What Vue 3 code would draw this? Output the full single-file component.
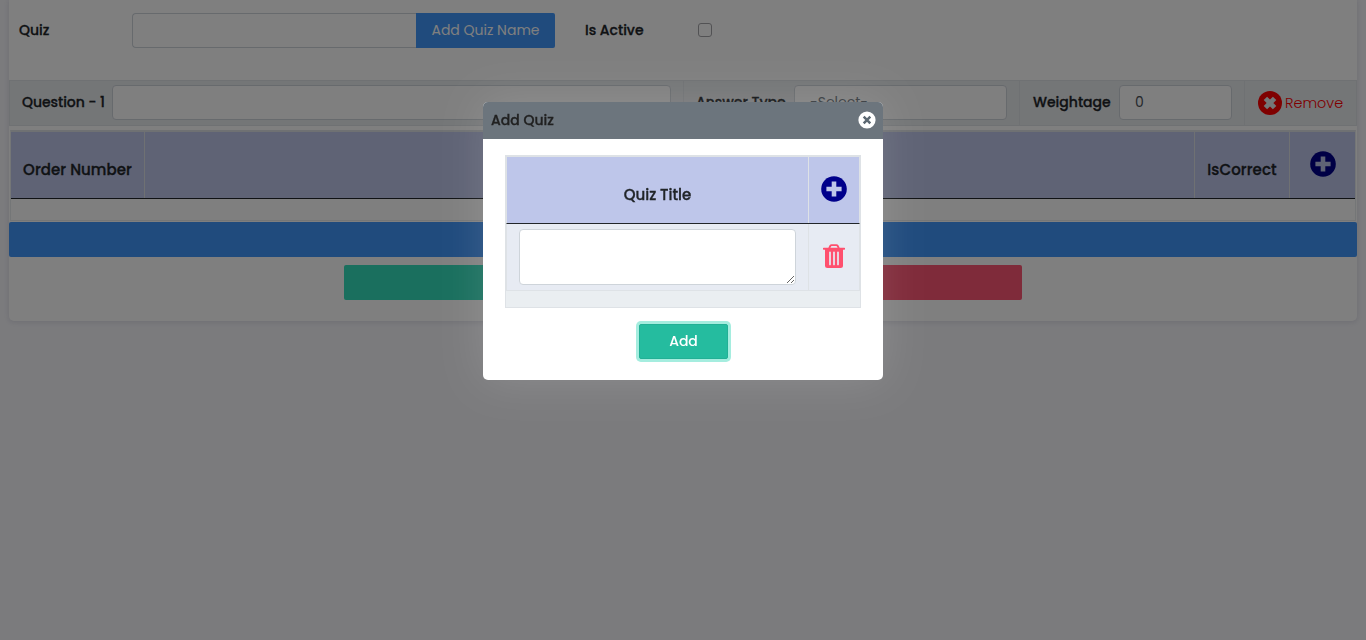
<script setup>
import { ref } from 'vue'

const quizName = ref('')
const isActive = ref(false)
const question = ref('')
const weightage = ref('0')
const title = ref('')
</script>

<template>
  <div class="page">
    <main class="card">
      <div class="quiz-row">
        <label class="label quiz-label">Quiz</label>
        <div class="input-group">
          <input v-model="quizName" class="control" type="text" />
          <button class="btn-name">Add Quiz Name</button>
        </div>
        <label class="label active-label">Is Active</label>
        <input v-model="isActive" class="check" type="checkbox" />
      </div>

      <div class="question-row">
        <div class="cell c-question">
          <span class="label t-question">Question - 1</span>
          <input v-model="question" class="control" type="text" />
        </div>
        <div class="cell c-type">
          <span class="label t-type">Answer Type</span>
          <div class="control select">-Select-</div>
        </div>
        <div class="cell c-weight">
          <span class="label t-weight">Weightage</span>
          <input v-model="weightage" class="control number" type="text" />
        </div>
        <div class="cell c-remove">
          <svg width="24" height="24" viewBox="0 0 24 24">
            <circle cx="12" cy="12" r="12" fill="#f00" />
            <path d="M7.4 7.4l9.2 9.2M16.6 7.4l-9.2 9.2" stroke="#e9ecef" stroke-width="4.800" />
          </svg>
          <span class="remove">Remove</span>
        </div>
      </div>

      <div class="answers">
        <div class="answers-head">
          <div class="th order">Order Number</div>
          <div class="th fill"></div>
          <div class="th correct">IsCorrect</div>
          <div class="th plus">
            <svg width="26" height="26" viewBox="0 0 26 26">
              <circle cx="13" cy="13" r="12.8" fill="#00008b" />
              <path d="M13 5.4v15.2M5.4 13h15.2" stroke="#bec6ea" stroke-width="4.6" />
            </svg>
          </div>
        </div>
      </div>

      <div class="bar"></div>
      <div class="actions">
        <div class="action save"></div>
        <div class="action cancel"></div>
      </div>
    </main>

    <div class="backdrop">
      <section class="modal">
        <header class="modal-head">
          <h2>Add Quiz</h2>
          <svg width="18" height="18" viewBox="0 0 18 18">
            <circle cx="9" cy="9" r="8.6" fill="#fff" />
            <path d="M5.700 5.700l6.600 6.600M12.300 5.700l-6.600 6.600" stroke="#5d6973" stroke-width="2.5" />
          </svg>
        </header>
        <div class="modal-body">
          <div class="grid">
            <div class="grid-head">
              <div class="g-title">Quiz Title</div>
              <div class="g-icon">
                <svg width="26" height="26" viewBox="0 0 26 26">
                  <circle cx="13" cy="13" r="12.8" fill="#00008b" />
                  <path d="M13 5.4v15.2M5.4 13h15.2" stroke="#bec6ea" stroke-width="4.6" />
                </svg>
              </div>
            </div>
            <div class="grid-row">
              <div class="g-title"><textarea v-model="title"></textarea></div>
              <div class="g-icon">
                <svg width="22" height="25" viewBox="0 0 22 25" fill="none">
                  <path d="M6.2 4.2L7.4 1.8Q7.8 1.1 8.6 1.1H13.4Q14.2 1.1 14.6 1.8L15.8 4.2" stroke="#ff506e" stroke-width="1.9" />
                  <rect y="3.8" width="22" height="1.9" rx=".6" fill="#ff506e" />
                  <path d="M2 5h18v16.500q0 2.5-2.5 2.5h-13Q2 24 2 21.500z" fill="#ff506e" />
                  <path d="M7 8.3v12.100M11 8.3v12.100M15 8.3v12.100" stroke="#e7ebf3" stroke-width="1.7" stroke-linecap="round" />
                </svg>
              </div>
            </div>
          </div>
          <button class="btn-add">Add</button>
        </div>
      </section>
    </div>
  </div>
</template>

<style>
body {
  margin: 0;
  overflow: hidden;
}
</style>

<style scoped>
.page,
.page * {
  box-sizing: border-box;
}
.page {
  height: 640px;
  padding: 0 9px;
  background: #f7f7fb;
  color: #212529;
  font-family: Poppins, Inter, "Open Sans", sans-serif;
  font-size: 14px;
}
svg {
  display: block;
  flex: none;
}
.card {
  height: 321px;
  background: #fff;
  border-radius: 0 0 5px 5px;
  box-shadow: 0 1px 5px 1px rgba(69, 65, 110, 0.12);
}
.quiz-row {
  display: flex;
  align-items: center;
  height: 80px;
  padding: 0 10px 20px;
}
.label {
  font-weight: 500;
  white-space: nowrap;
}
.label,
.th,
.grid-head,
.modal-head h2 {
  -webkit-text-stroke: 0.3px currentColor;
}
.quiz-label {
  width: 113px;
}
.input-group {
  display: flex;
  width: 423px;
}
.control {
  display: block;
  min-width: 0;
  height: 35px;
  border: 1px solid #ced4da;
  border-radius: 4px;
  background: #fff;
  color: #495057;
  font: inherit;
  outline: 0;
}
.input-group .control {
  flex: 1;
  border-right: 0;
  border-radius: 4px 0 0 4px;
}
.btn-name {
  width: 139px;
  height: 35px;
  padding: 0;
  border: 0;
  border-radius: 0 2px 2px 0;
  background: #4096fa;
  color: #fff;
  font: inherit;
  white-space: nowrap;
}
.active-label {
  width: 113px;
  margin-left: 30px;
}
.check {
  appearance: none;
  width: 14px;
  height: 14px;
  margin: 0;
  border: 1px solid #a4a4a8;
  border-radius: 3px;
  background: #fff;
}
.question-row {
  display: flex;
  height: 46px;
  border: 1px solid #dee2e6;
  background: #e9ecef;
}
.cell {
  display: flex;
  align-items: center;
  padding: 0 12px 2px;
  border-right: 1px solid #dee2e6;
}
.cell .label {
  flex: none;
}
.cell .control {
  flex: 1;
}
.c-question {
  width: 674px;
}
.t-question {
  width: 90px;
  letter-spacing: -0.06px;
}
.c-type {
  width: 336px;
}
.t-type {
  width: 98px;
}
.c-weight {
  width: 225px;
}
.t-weight {
  width: 87px;
  padding-left: 1px;
}
.c-remove {
  flex: 1;
  padding: 0 0 1px 13px;
  border: 0;
}
.remove {
  margin: 2px 0 0 3px;
  color: #f00;
  font-size: 14.4px;
  font-weight: 300;
}
.cell .select {
  padding: 0 15px;
  line-height: 33px;
  color: #6c757d;
}
.cell .number {
  padding: 0 15px;
}
.answers {
  height: 91px;
  margin: 4px 1px 0;
  border: 1px solid #e9ecef;
  border-top-color: #dee2e6;
}
.answers-head {
  display: flex;
  height: 68px;
  border-top: 1px solid #dee2e6;
  border-bottom: 1px solid #212529;
  background: #bec6ea;
}
.th {
  display: flex;
  align-items: center;
  justify-content: center;
  padding-top: 8px;
  border-right: 1px solid #dee2e6;
  font-size: 15px;
  font-weight: 500;
  white-space: nowrap;
}
.order {
  width: 134px;
  letter-spacing: 0.08px;
}
.fill {
  flex: 1;
}
.correct {
  width: 95px;
  letter-spacing: 0.1px;
}
.plus {
  width: 65px;
  padding: 0 0 3px;
  border-right: 0;
}
.bar {
  height: 35px;
  margin-top: 1px;
  border-radius: 2px;
  background: #4096fa;
}
.actions {
  display: flex;
  width: 678px;
  margin: 8px 0 0 335px;
}
.action {
  flex: 1;
  height: 35px;
  border-radius: 2px;
}
.save {
  background: #34debc;
}
.cancel {
  background: #ff5674;
}
.backdrop {
  position: fixed;
  inset: 0;
  background: rgba(0, 0, 0, 0.5);
}
.modal {
  width: 400px;
  height: 278px;
  margin: 102px 0 0 483px;
  overflow: hidden;
  border-radius: 5px;
  background: #fff;
  box-shadow: 0 0 45px rgba(255, 255, 255, 0.14);
}
.modal-head {
  display: flex;
  align-items: center;
  justify-content: space-between;
  height: 37px;
  padding: 0 7px 1px 8px;
  background: #6c757d;
}
.modal-head h2 {
  margin: 0;
  color: #212121;
  font-size: 14px;
  font-weight: 500;
}
.modal-body {
  padding: 16px 22px;
}
.grid {
  height: 153px;
  border: 1px solid #dee2e6;
  background: #eaeef1;
}
.grid-head,
.grid-row {
  display: flex;
  border: 1px solid #dee2e6;
}
.grid-head {
  height: 68px;
  border-bottom-color: #212529;
  background: #bec6ea;
  font-size: 15px;
  font-weight: 500;
}
.grid-row {
  height: 67px;
  border-top: 0;
  background: #e7ebf3;
}
.g-title {
  display: flex;
  flex: 1;
  align-items: center;
  justify-content: center;
  border-right: 1px solid #dee2e6;
}
.grid-head .g-title {
  padding-top: 8px;
}
.g-icon {
  display: flex;
  width: 50px;
  align-items: center;
  justify-content: center;
  padding-bottom: 2px;
}
textarea {
  display: block;
  width: 277px;
  height: 56px;
  border: 1px solid #ced4da;
  border-radius: 4px;
  outline: 0;
  resize: vertical;
}
.btn-add {
  display: block;
  width: 89px;
  height: 35px;
  margin: 16px auto 0 134px;
  padding: 0;
  border: 1px solid #22b095;
  border-radius: 2px;
  background: #25bc9f;
  box-shadow: 0 0 0 3px #a5eddf;
  color: #fff;
  font: inherit;
  font-weight: 500;
}
</style>
